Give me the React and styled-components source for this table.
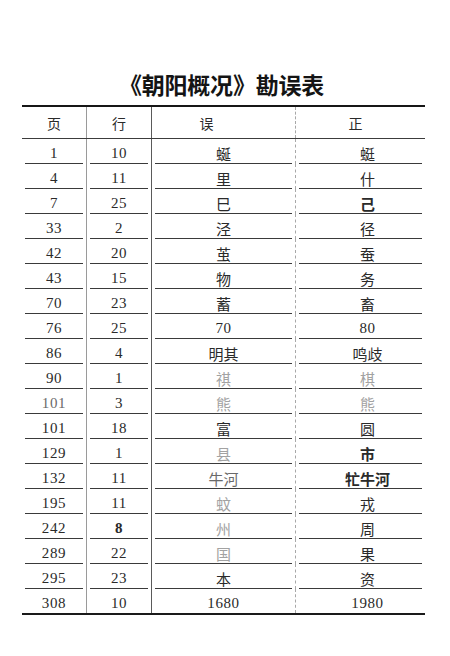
import React from "react";
import styled, { createGlobalStyle } from "styled-components";

const Global = createGlobalStyle`
  html, body { margin: 0; padding: 0; background: #ffffff; }
  body { font-family: "Noto Sans CJK SC", "Noto Sans", sans-serif; color: #222; }
`;

const COLS = "64px 65px 144px 130px";
const VLINES = ["none", "1px solid #9a9a9a", "1px solid #5a5a5a", "1px dashed #a8a8a8"];

const Page = styled.div`
  width: 450px;
  height: 656px;
  box-sizing: border-box;
  padding: 73px 25px 0 22px;
  display: flex;
  flex-direction: column;
  align-items: stretch;
`;

const Title = styled.h1`
  margin: 0 0 9px 0;
  height: 23px;
  font-family: "Noto Sans CJK SC", sans-serif;
  font-weight: 700;
  font-size: 23px;
  line-height: 23px;
  letter-spacing: -0.2px;
  text-align: center;
  color: #141414;
  padding-right: 4px;
`;

const Table = styled.div`
  width: 403px;
  border-top: 2px solid #161616;
  border-bottom: 2px solid #1a1a1a;
  display: flex;
  flex-direction: column;
`;

const HeadRow = styled.div`
  display: grid;
  grid-template-columns: ${COLS};
  height: 31px;
  border-bottom: 1px solid #3c3c3c;
`;

const HeadCell = styled.div`
  display: flex;
  align-items: center;
  justify-content: center;
  border-left: ${(p) => VLINES[p.$i]};
  padding-right: ${(p) => p.$shift}px;
  font-family: "Noto Sans CJK SC", sans-serif;
  font-size: 14px;
  font-weight: 400;
  color: #2a2a2a;
  line-height: 1;
`;

const Row = styled.div`
  display: grid;
  grid-template-columns: ${COLS};
  height: ${(p) => (p.$last ? 24 : 25)}px;
`;

const Cell = styled.div`
  display: flex;
  border-left: ${(p) => VLINES[p.$i]};
  padding: 0 3px;
`;

const Inner = styled.div`
  flex: 1;
  display: flex;
  align-items: flex-end;
  justify-content: center;
  padding-bottom: 2px;
  padding-left: ${(p) => p.$shift}px;
  border-bottom: ${(p) => (p.$last ? "none" : "1px solid #3a3a3a")};
`;

const Txt = styled.span`
  font-family: ${(p) =>
    p.$num ? '"Liberation Serif", "DejaVu Serif", serif' : '"Noto Sans CJK SC", sans-serif'};
  font-size: 15px;
  line-height: 1;
  letter-spacing: ${(p) => (p.$num ? "0.6px" : "0")};
  font-weight: ${(p) => (p.$bold ? 700 : 400)};
  color: ${(p) => (p.$faint ? "#a2a2a2" : p.$mid ? "#6a6a6a" : "#2a2a2a")};
`;

const rows = [
  ["1", "10", "蜒", "蜓"],
  ["4", "11", "里", "什"],
  ["7", "25", "巳", "己", { b: true }],
  ["33", "2", "泾", "径"],
  ["42", "20", "茧", "蚕"],
  ["43", "15", "物", "务"],
  ["70", "23", "蓄", "畜"],
  ["76", "25", "70", "80"],
  ["86", "4", "明其", "鸣歧"],
  ["90", "1", "祺", "棋", { fe: true, fc: true }],
  ["101", "3", "熊", "熊", { fe: true, fc: true, fp: true }],
  ["101", "18", "富", "圆"],
  ["129", "1", "县", "市", { fe: true, b: true }],
  ["132", "11", "牛河", "牤牛河", { me: true, b: true }],
  ["195", "11", "蚊", "戎", { fe: true }],
  ["242", "8", "州", "周", { fe: true, bl: true }],
  ["289", "22", "国", "果", { fe: true }],
  ["295", "23", "本", "资"],
  ["308", "10", "1680", "1980"],
];

const isNum = (s) => /^[0-9]+$/.test(s);

function DataRow({ data, last }) {
  const [pg, ln, wrong, right, f = {}] = data;
  return (
    <Row $last={last}>
      <Cell $i={0}>
        <Inner $last={last} $shift={0}>
          <Txt $num $mid={f.fp}>{pg}</Txt>
        </Inner>
      </Cell>
      <Cell $i={1}>
        <Inner $last={last} $shift={0}>
          <Txt $num $bold={f.bl}>{ln}</Txt>
        </Inner>
      </Cell>
      <Cell $i={2}>
        <Inner $last={last} $shift={0}>
          <Txt $num={isNum(wrong)} $faint={f.fe} $mid={f.me}>
            {wrong}
          </Txt>
        </Inner>
      </Cell>
      <Cell $i={3}>
        <Inner $last={last} $shift={14}>
          <Txt $num={isNum(right)} $faint={f.fc} $bold={f.b}>
            {right}
          </Txt>
        </Inner>
      </Cell>
    </Row>
  );
}

export default function App() {
  return (
    <>
      <Global />
      <Page>
        <Title>《朝阳概况》勘误表</Title>
        <Table>
          <HeadRow>
            <HeadCell $i={0} $shift={0}>页</HeadCell>
            <HeadCell $i={1} $shift={0}>行</HeadCell>
            <HeadCell $i={2} $shift={34}>误</HeadCell>
            <HeadCell $i={3} $shift={10}>正</HeadCell>
          </HeadRow>
          {rows.map((r, i) => (
            <DataRow key={i} data={r} last={i === rows.length - 1} />
          ))}
        </Table>
      </Page>
    </>
  );
}
